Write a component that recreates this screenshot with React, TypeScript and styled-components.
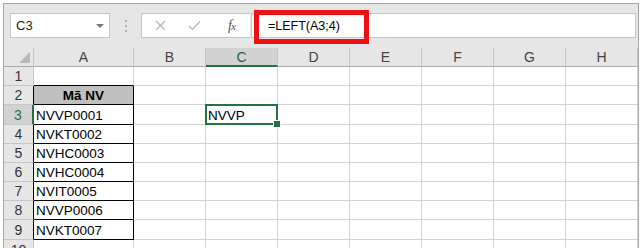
import React from 'react'
import styled, { createGlobalStyle, css } from 'styled-components'

const GlobalStyle = createGlobalStyle`
  html, body {
    margin: 0;
    padding: 0;
    background: #ffffff;
  }
  * {
    box-sizing: border-box;
  }
`

const GREEN = '#217346'
const GRID = '#d4d4d4'
const HEAD_LINE = '#c6c6c6'

const COLUMNS = ['A', 'B', 'C', 'D', 'E', 'F', 'G', 'H']
const ROW_HEIGHTS = [19, 19, 20, 19, 19, 19, 19, 19, 20, 20]
const CODES = ['NVVP0001', 'NVKT0002', 'NVHC0003', 'NVHC0004', 'NVIT0005', 'NVVP0006', 'NVKT0007']

const Page = styled.div`
  width: 642px;
  height: 248px;
  padding: 3px 3px 0 3px;
  overflow: hidden;
  font-family: 'Liberation Sans', Arial, sans-serif;
`

const Frame = styled.div`
  width: 636px;
  border: 1px solid #a6a6a6;
  border-bottom: none;
  background: #e6e6e6;
`

const FormulaBar = styled.div`
  display: flex;
  align-items: center;
  height: 44px;
  padding: 9px 0 10px 6px;
`

const NameBox = styled.div`
  display: flex;
  align-items: center;
  justify-content: space-between;
  width: 100px;
  height: 25px;
  padding: 0 5px 0 5px;
  background: #ffffff;
  border: 1px solid #c6c6c6;
  font-size: 13px;
  color: #222;
`

const Caret = styled.span`
  width: 0;
  height: 0;
  border-left: 4px solid transparent;
  border-right: 4px solid transparent;
  border-top: 4px solid #777;
  margin-top: 1px;
`

const Grip = styled.div`
  display: flex;
  flex-direction: column;
  align-items: center;
  justify-content: center;
  gap: 3px;
  width: 31px;
  height: 25px;

  span {
    width: 2px;
    height: 2px;
    background: #b0b0b0;
  }
`

const ButtonBox = styled.div`
  display: flex;
  align-items: center;
  width: 109px;
  height: 25px;
  padding-left: 13px;
  background: #ffffff;
  border: 1px solid #c6c6c6;
  border-right: none;
`

const IconSlot = styled.span<{ $w: number }>`
  display: flex;
  align-items: center;
  width: ${({ $w }) => $w}px;
`

const Fx = styled.span`
  font-family: 'Liberation Serif', 'Times New Roman', serif;
  font-style: italic;
  font-size: 14px;
  color: #555;
  letter-spacing: -1px;

  small {
    font-size: 11px;
  }
`

const FormulaInput = styled.div`
  position: relative;
  display: flex;
  align-items: center;
  flex: 1;
  height: 25px;
  margin: 0 2px 0 1px;
  padding-left: 16px;
  background: #ffffff;
  border: 1px solid #c6c6c6;
  font-size: 12.5px;
  color: #000;
`

const Callout = styled.div`
  position: absolute;
  left: 2px;
  top: -4px;
  width: 115px;
  height: 34px;
  border: 5px solid #ee1111;
  pointer-events: none;
`

const Sheet = styled.div`
  background: #ffffff;
`

const Row = styled.div<{ $h: number }>`
  display: grid;
  grid-template-columns: 30px 100px repeat(7, 72px);
  height: ${({ $h }) => $h}px;
`

const HeadCell = styled.div<{ $active?: boolean }>`
  display: flex;
  align-items: center;
  justify-content: center;
  background: #e6e6e6;
  border-right: 1px solid ${HEAD_LINE};
  border-bottom: 1px solid #ababab;
  font-size: 14px;
  color: #444;

  ${({ $active }) =>
    $active &&
    css`
      background: #d2d2d2;
      color: #2f5f40;
      border-bottom: 2px solid ${GREEN};
    `}
`

const Corner = styled(HeadCell)`
  position: relative;

  &::after {
    content: '';
    position: absolute;
    right: 3px;
    bottom: 3px;
    width: 0;
    height: 0;
    border-left: 11px solid transparent;
    border-bottom: 11px solid #b9b9b9;
  }
`

const RowHead = styled.div<{ $active?: boolean; $edge?: string }>`
  display: flex;
  align-items: center;
  justify-content: center;
  background: #e6e6e6;
  border-right: 1px solid ${({ $edge }) => $edge || HEAD_LINE};
  border-bottom: 1px solid ${HEAD_LINE};
  font-size: 14px;
  color: #333;

  ${({ $active }) =>
    $active &&
    css`
      background: #d2d2d2;
      color: ${GREEN};
      border-right: 2px solid ${GREEN};
    `}
`

const Cell = styled.div<{ $right?: string; $bottom?: string; $head?: boolean }>`
  display: flex;
  align-items: center;
  padding: 1px 0 0 2px;
  border-right: 1px solid ${({ $right }) => $right || GRID};
  border-bottom: 1px solid ${({ $bottom }) => $bottom || GRID};
  font-size: 13.5px;
  color: #000;
  white-space: nowrap;

  ${({ $head }) =>
    $head &&
    css`
      justify-content: center;
      padding-left: 0;
      background: #bfbfbf;
      font-weight: bold;
    `}
`

const SelectedCell = styled(Cell)`
  position: relative;

  &::before {
    content: '';
    position: absolute;
    left: -1px;
    top: -1px;
    right: -1px;
    bottom: -1px;
    border: 2px solid ${GREEN};
  }

  &::after {
    content: '';
    position: absolute;
    right: -4px;
    bottom: -4px;
    width: 6px;
    height: 6px;
    background: ${GREEN};
    border: 1px solid #ffffff;
    z-index: 1;
  }
`

const CancelIcon = () => (
  <svg width="11" height="11" viewBox="0 0 11 11">
    <path d="M1 1 L10 10 M10 1 L1 10" stroke="#b4b4b4" strokeWidth="1.2" fill="none" />
  </svg>
)

const CheckIcon = () => (
  <svg width="13" height="11" viewBox="0 0 13 11">
    <path d="M1 6 L4.5 9.5 L12 1.5" stroke="#b4b4b4" strokeWidth="1.2" fill="none" />
  </svg>
)

const SheetRow = ({ index }: { index: number }) => {
  const n = index + 1
  const boxed = n >= 2 && n <= 9
  const aText = n === 2 ? 'Mã NV' : n >= 3 && n <= 9 ? CODES[n - 3] : ''

  return (
    <Row $h={ROW_HEIGHTS[index]}>
      <RowHead $active={n === 3} $edge={boxed ? '#000' : undefined}>
        {n}
      </RowHead>
      <Cell
        $head={n === 2}
        $right={boxed ? '#000' : undefined}
        $bottom={n >= 1 && n <= 9 ? '#000' : undefined}
      >
        {aText}
      </Cell>
      <Cell />
      {n === 3 ? <SelectedCell>NVVP</SelectedCell> : <Cell />}
      <Cell />
      <Cell />
      <Cell />
      <Cell />
      <Cell />
    </Row>
  )
}

export default function App() {
  return (
    <>
      <GlobalStyle />
      <Page>
        <Frame>
          <FormulaBar>
            <NameBox>
              C3
              <Caret />
            </NameBox>
            <Grip>
              <span />
              <span />
              <span />
            </Grip>
            <ButtonBox>
              <IconSlot $w={33}>
                <CancelIcon />
              </IconSlot>
              <IconSlot $w={40}>
                <CheckIcon />
              </IconSlot>
              <Fx>
                f<small>x</small>
              </Fx>
            </ButtonBox>
            <FormulaInput>
              =LEFT(A3;4)
              <Callout />
            </FormulaInput>
          </FormulaBar>
          <Sheet>
            <Row $h={19}>
              <Corner />
              {COLUMNS.map((c) => (
                <HeadCell key={c} $active={c === 'C'}>
                  {c}
                </HeadCell>
              ))}
            </Row>
            {ROW_HEIGHTS.map((_, i) => (
              <SheetRow key={i} index={i} />
            ))}
          </Sheet>
        </Frame>
      </Page>
    </>
  )
}
